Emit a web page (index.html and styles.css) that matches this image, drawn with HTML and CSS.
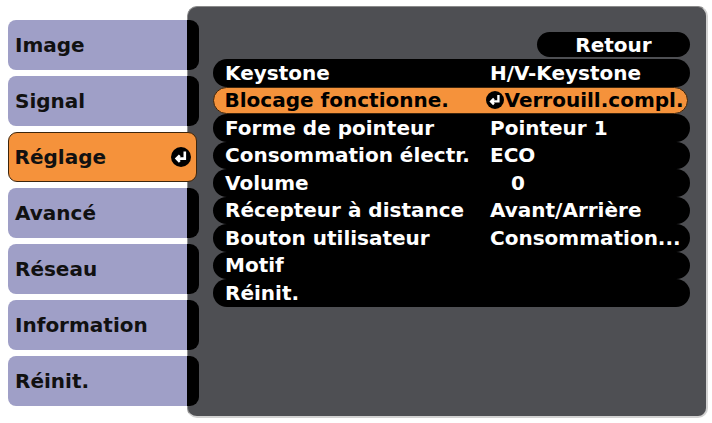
FILE: index.html
```html
<!DOCTYPE html>
<html lang="fr">
<head>
    <meta charset="UTF-8">
    <meta name="viewport" content="width=device-width, initial-scale=1.0">
    <title>Réglage</title>
    <link rel="stylesheet" href="styles.css">
</head>
<body>

<div class="screen">
    <ul class="menu">
        <li class="menu-item"><span class="menu-label">Image</span></li>
        <li class="menu-item"><span class="menu-label">Signal</span></li>
        <li class="menu-item active">
            <span class="menu-label">Réglage</span>
            <svg class="enter-icon" viewBox="0 0 20 20">
                <circle cx="10" cy="10" r="10" fill="#000"/>
                <path d="M13.8 4.5 V11.6 H5.6 M8.8 8.4 L5.6 11.6 L8.8 14.8" fill="none" stroke="#fff" stroke-width="2.6"/>
            </svg>
        </li>
        <li class="menu-item"><span class="menu-label">Avancé</span></li>
        <li class="menu-item"><span class="menu-label">Réseau</span></li>
        <li class="menu-item"><span class="menu-label">Information</span></li>
        <li class="menu-item"><span class="menu-label">Réinit.</span></li>
    </ul>

    <div class="panel">
        <div class="back-button">Retour</div>
        <ul class="settings">
            <li class="setting"><span class="setting-name">Keystone</span><span class="setting-value">H/V-Keystone</span></li>
            <li class="setting selected">
                <span class="setting-name">Blocage fonctionne.</span>
                <span class="setting-value with-icon">
                    <svg class="enter-icon small" viewBox="0 0 20 20">
                        <circle cx="10" cy="10" r="10" fill="#000"/>
                        <path d="M13.8 4.5 V11.6 H5.6 M8.8 8.4 L5.6 11.6 L8.8 14.8" fill="none" stroke="#fff" stroke-width="2.6"/>
                    </svg>Verrouill.compl.
                </span>
            </li>
            <li class="setting"><span class="setting-name">Forme de pointeur</span><span class="setting-value">Pointeur 1</span></li>
            <li class="setting"><span class="setting-name">Consommation électr.</span><span class="setting-value">ECO</span></li>
            <li class="setting"><span class="setting-name">Volume</span><span class="setting-value num">0</span></li>
            <li class="setting"><span class="setting-name">Récepteur à distance</span><span class="setting-value">Avant/Arrière</span></li>
            <li class="setting"><span class="setting-name">Bouton utilisateur</span><span class="setting-value">Consommation...</span></li>
            <li class="setting"><span class="setting-name">Motif</span></li>
            <li class="setting"><span class="setting-name">Réinit.</span></li>
        </ul>
    </div>
</div>

</body>
</html>
```

FILE: styles.css
```css
body {
    margin: 0;
    background-color: #fff;
    font-family: "DejaVu Sans", Verdana, sans-serif;
    font-weight: bold;
    font-size: 20px;
}
ul {
    list-style: none;
    margin: 0;
    padding: 0;
}
.screen {
    display: flex;
    align-items: flex-start;
    padding: 6px 0 0 8px;
}

/* --- left menu --- */
.menu {
    width: 191px;
    margin-top: 14px;
    position: relative;
    z-index: 1;
}
.menu-item {
    display: flex;
    height: 50px;
    margin-bottom: 6px;
    color: #111;
}
.menu-label {
    flex: 1;
    display: flex;
    align-items: center;
    padding-left: 7px;
    background-color: #9f9fc7;
    border-radius: 8px 0 0 8px;
}
.menu-item::after {
    content: "";
    width: 12px;
    background-color: #000;
    border-radius: 0 9px 9px 0;
}
.menu-item.active {
    width: 189px;
    box-sizing: border-box;
    align-items: center;
    padding-right: 5px;
    background-color: #f5923b;
    border: 1.5px solid #3d250c;
    border-radius: 9px;
}
.menu-item.active .menu-label {
    background: none;
    padding-left: 5.5px;
}
.menu-item.active::after {
    display: none;
}
.enter-icon {
    flex-shrink: 0;
    width: 20px;
    height: 20px;
}
.enter-icon.small {
    width: 18px;
    height: 18px;
}

/* --- settings panel --- */
.panel {
    margin-left: -12px;
    width: 521px;
    height: 412px;
    box-sizing: border-box;
    display: flex;
    flex-direction: column;
    padding: 25px 16px 0 25px;
    background-color: #4e4f53;
    border: 1px solid #8a8a8a;
    border-right: 2px solid #d2d2d2;
    border-bottom: 2px solid #d2d2d2;
    border-radius: 10px;
    color: #fff;
}
.back-button {
    align-self: flex-end;
    width: 153px;
    height: 25px;
    margin-bottom: 2px;
    display: flex;
    align-items: center;
    justify-content: center;
    background-color: #000;
    border-radius: 13px;
}
.setting {
    display: flex;
    align-items: center;
    height: 27.5px;
    padding-left: 12px;
    background-color: #000;
    border-radius: 14px;
}
.setting-name {
    width: 265px;
    white-space: nowrap;
}
.setting-value {
    white-space: nowrap;
}
.setting-value.num {
    padding-left: 21px;
}
.setting-value.with-icon {
    display: flex;
    align-items: center;
    gap: 1px;
    margin-left: -4px;
}
.setting.selected {
    box-sizing: border-box;
    margin-right: 2px;
    padding-left: 10.5px;
    background-color: #f5923b;
    border: 1.5px solid #3d250c;
    color: #000;
}
```
